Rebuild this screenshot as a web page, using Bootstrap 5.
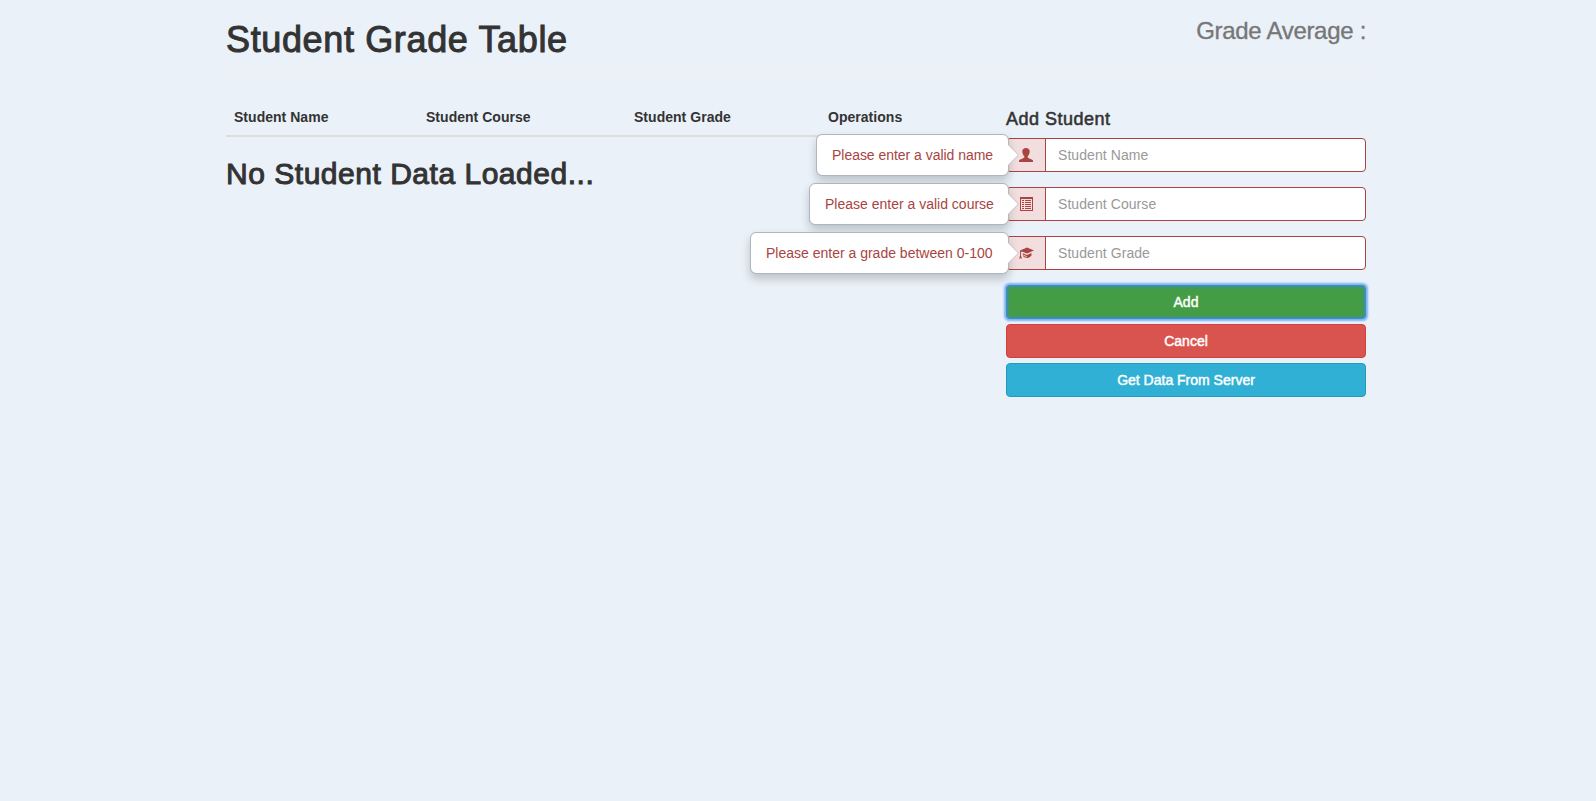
<!DOCTYPE html>
<html lang="en">
<head>
<meta charset="utf-8">
<meta name="viewport" content="width=device-width, initial-scale=1">
<title>Student Grade Table</title>
<link href="https://cdn.jsdelivr.net/npm/bootstrap@5.3.0/dist/css/bootstrap.min.css" rel="stylesheet">
<style>
body{background:#eaf1f9;color:#333;font:14px/20px "Liberation Sans",Arial,sans-serif;min-height:801px}
.sgt-page{width:1140px;margin-left:226px}
h1,h2,h4,.average{font-weight:400;-webkit-text-stroke:1px currentColor;margin:0}
.sgt-header{height:79px;padding-top:20px;border-bottom:1px solid #eee}
h1{font-size:36px;line-height:40px;letter-spacing:.64px}
.average{font-size:24px;line-height:26px;letter-spacing:-.3px;color:#777;-webkit-text-stroke-width:.35px;margin-top:-2px}
.sgt-main{padding-top:21px;gap:30px}
.grades{width:750px}
.sgt-form{width:360px}
.grades .table{--bs-table-bg:transparent;--bs-table-color:#333;margin:0;table-layout:fixed;color:#333}
.grades .table th{padding:7px 8px 8px;border-bottom:2px solid #ddd;line-height:20px;letter-spacing:.03px}
h2{font-size:30px;line-height:33px;margin-top:20px;letter-spacing:.52px}
h4{font-size:18px;line-height:20px;margin:9px 0;letter-spacing:.5px;-webkit-text-stroke-width:.55px}
.field{height:34px;margin-bottom:15px}
.field .input-group{height:34px}
.field .input-group-text{width:40px;padding:0 0 0 12px;background:#f2dede;border-color:#a94442;color:#a94442;border-radius:4px 0 0 4px}
.field .form-control{font-size:14px;line-height:20px;padding:6px 12px;border-color:#a94442;border-radius:0 4px 4px 0}
.field .form-control::placeholder{color:#999;opacity:1;letter-spacing:.07px}
.field .hint{position:absolute;right:357px;top:-4px;left:auto;width:193px;max-width:none;height:42px;padding:10px 0 10px 15px;font:14px/20px "Liberation Sans",Arial,sans-serif;color:#a94442;border:1px solid #b0b6bd;border-radius:6px;box-shadow:0 5px 10px rgba(0,0,0,.2);white-space:nowrap;z-index:6}
.field .hint-name{letter-spacing:-.03px}
.field .hint-course{width:200px}
.field .hint-grade{width:259px}
.hint::before,.hint::after{content:"";position:absolute;border:solid transparent;border-right:0}
.hint::before{border-width:11px 0 11px 11px;border-left-color:#bfbfc1;right:-11px;top:9px}
.hint::after{border-width:10px 0 10px 10px;border-left-color:#fff;right:-10px;top:10px}
.sgt-btn{display:block;width:100%;height:34px;padding:6px 12px;margin-bottom:5px;font-size:14px;line-height:20px;border-radius:4px;color:#fff;-webkit-text-stroke:.45px #fff}
.b-add{background:#449d44;border-color:#3d8fc8;box-shadow:0 0 2px 1.5px #7db3f5,inset 0 0 3px 1px #3d8fb0}
.b-cancel{background:#d9534f;border-color:#d43f3a}
.b-get{background:#31b0d5;border-color:#269abc}
</style>
</head>
<body>
<div class="sgt-page">
  <header class="sgt-header d-flex justify-content-between align-items-start">
    <h1>Student Grade Table</h1>
    <div class="average">Grade Average :</div>
  </header>
  <main class="sgt-main d-flex align-items-start">
    <section class="grades">
      <table class="table">
        <colgroup><col style="width:192px"><col style="width:208px"><col style="width:194px"><col></colgroup>
        <thead><tr><th>Student Name</th><th>Student Course</th><th>Student Grade</th><th>Operations</th></tr></thead>
      </table>
      <h2>No Student Data Loaded...</h2>
    </section>
    <form class="sgt-form">
      <h4>Add Student</h4>
      <div class="field position-relative">
        <div class="input-group flex-nowrap">
          <span class="input-group-text"><svg width="14" height="14" viewBox="0 0 14 14" fill="currentColor"><path d="M7 0C4.700 0 3.300 1.500 3.300 3.500c0 1 .2 1.800.5 2.600.3.9.9 1.600 1.500 2.100v.8c0 .7-.6 1-1.500 1.400C2.100 11.100 0 11.500 0 12.800V14h14v-1.200c0-1.300-2.100-1.700-3.800-2.400-.9-.4-1.500-.7-1.500-1.400v-.8c.6-.5 1.200-1.200 1.500-2.100.3-.8.5-1.600.5-2.600C10.700 1.500 9.300 0 7 0z"/></svg></span>
          <input class="form-control" type="text" placeholder="Student Name">
        </div>
        <div class="hint hint-name popover">Please enter a valid name</div>
      </div>
      <div class="field position-relative">
        <div class="input-group flex-nowrap">
          <span class="input-group-text"><svg width="15" height="14" viewBox="0 0 15 14" fill="currentColor"><path fill-rule="evenodd" d="M1 0h13v14H1zM2 2v11h11V2z"/><path d="M3 3h2v1H3zm3 0h6v1H6zM3 5h2v1H3zm3 0h6v1H6zM3 7h2v1H3zm3 0h6v1H6zM3 9h2v1H3zm3 0h6v1H6zM3 11h2v1H3zm3 0h6v1H6z"/></svg></span>
          <input class="form-control" type="text" placeholder="Student Course">
        </div>
        <div class="hint hint-course popover">Please enter a valid course</div>
      </div>
      <div class="field position-relative">
        <div class="input-group flex-nowrap">
          <span class="input-group-text"><svg width="15" height="14" viewBox="0 0 15 14" fill="currentColor"><path d="M8 1.500 15 4.500 8 7.500 2.800 5.500 2 6.500v3L3 13l-1.500-1L0 13l1.100-3.500V6L1 4.500z"/><path d="m3.700 7.200 4.300 1.800 4.500-1.900v2.500C11.200 11.200 10 12 8.300 12S5 11.300 3.700 9.800l.7-.5C5.500 10.300 7 10.800 8 10.800v-.6L3.700 8.500z"/></svg></span>
          <input class="form-control" type="text" placeholder="Student Grade">
        </div>
        <div class="hint hint-grade popover">Please enter a grade between 0-100</div>
      </div>
      <button type="button" class="btn sgt-btn b-add">Add</button>
      <button type="button" class="btn sgt-btn b-cancel">Cancel</button>
      <button type="button" class="btn sgt-btn b-get">Get Data From Server</button>
    </form>
  </main>
</div>
<script src="https://cdn.jsdelivr.net/npm/bootstrap@5.3.0/dist/js/bootstrap.bundle.min.js"></script>
</body>
</html>
